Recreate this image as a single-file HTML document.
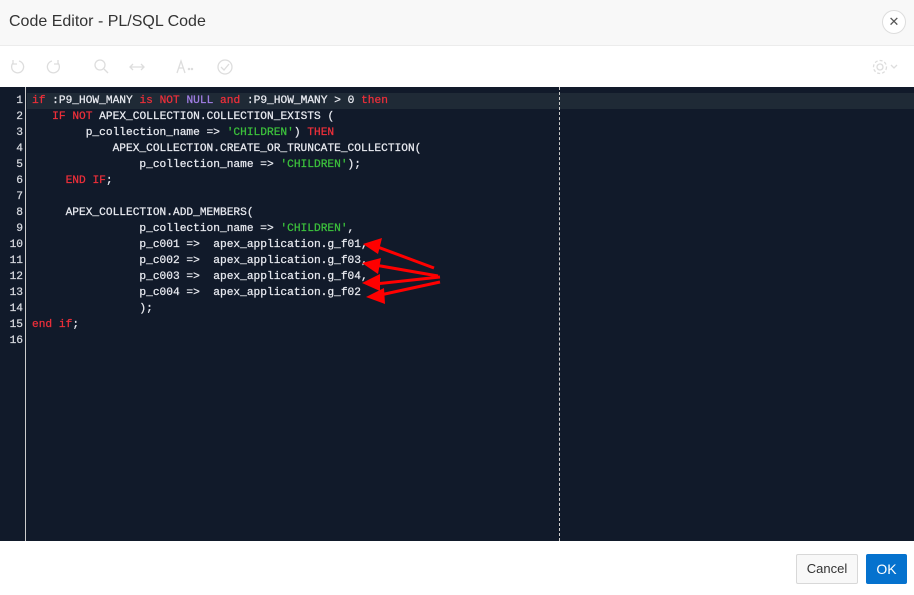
<!DOCTYPE html>
<html><head><meta charset="utf-8"><style>
*{margin:0;padding:0;box-sizing:border-box}
body{width:914px;height:595px;background:#fff;font-family:"Liberation Sans",sans-serif;position:relative;overflow:hidden}
.hdr{position:absolute;left:0;top:0;width:914px;height:46px;background:#f8f8f8;border-bottom:1px solid #ececec}
.hdr .t{position:absolute;left:9px;top:13px;font-size:16px;color:#333}
.x{position:absolute;left:882px;top:10px;width:24px;height:24px;border:1px solid #ddd;border-radius:50%;text-align:center;line-height:21px;font-size:13px;color:#555;background:#fff}
.tb{position:absolute;top:47px;left:0;width:914px;height:40px;background:#fff}
.ed{position:absolute;left:0;top:87px;width:914px;height:454px;background:#111a2a}
.gut{position:absolute;left:0;top:0;width:26px;height:454px;border-right:1px solid #ccc}
.dash{position:absolute;left:559px;top:0;height:454px;border-left:1px dashed #ccc}
.cur{position:absolute;left:27px;top:6px;width:887px;height:16px;background:#1f2a36}
.code{position:absolute;left:0;top:6px;font-family:"Liberation Mono",monospace;font-size:11.2px;line-height:16px;color:#e8eaf0;white-space:pre;-webkit-text-stroke:0.25px}
.ln{display:inline-block;width:23px;text-align:right;color:#d8dae0;margin-right:9px}
.k{color:#ee2f3a}.p{color:#a27fe6}.s{color:#3cc13c}
.btn{position:absolute;top:554px;height:30px;border-radius:2px;font-size:13px;line-height:28px;text-align:center}
</style></head><body>
<div class="hdr"><div class="t">Code Editor - PL/SQL Code</div><div class="x">✕</div></div>
<div class="tb">
<svg width="914" height="40" style="position:absolute;left:0;top:0" fill="none" stroke="#ddd" stroke-width="1.3">
<path d="M13 16 A6 6 0 1 0 19 14 M13 13 v4 h4"/>
<path d="M58 16 A6 6 0 1 1 52 14 M58 13 v4 h-4"/>
<circle cx="100" cy="18" r="5"/><path d="M104 22 l4 4"/>
<path d="M130 20 h14 M133 17 l-3 3 3 3 M141 17 l3 3 -3 3"/>
<path d="M177 26 l4 -12 4 12 M179 21 h4"/><circle cx="189" cy="22" r=".6"/><circle cx="192" cy="22" r=".6"/>
<circle cx="225" cy="20" r="7"/><path d="M221 20 l3 3 5 -6"/>
<circle cx="880" cy="20" r="3"/><circle cx="880" cy="20" r="6.5" stroke-dasharray="3 2"/><path d="M891 18 l3 3 3 -3"/>
</svg></div>
<div class="ed">
<div class="cur"></div>
<div class="gut"></div>
<div class="dash"></div>
<div class="code"><span class="ln">1</span><span class="k">if</span> :P9_HOW_MANY <span class="k">is</span> <span class="k">NOT</span> <span class="p">NULL</span> <span class="k">and</span> :P9_HOW_MANY &gt; 0 <span class="k">then</span>
<span class="ln">2</span>   <span class="k">IF</span> <span class="k">NOT</span> APEX_COLLECTION.COLLECTION_EXISTS (
<span class="ln">3</span>        p_collection_name =&gt; <span class="s">'CHILDREN'</span>) <span class="k">THEN</span>
<span class="ln">4</span>            APEX_COLLECTION.CREATE_OR_TRUNCATE_COLLECTION(
<span class="ln">5</span>                p_collection_name =&gt; <span class="s">'CHILDREN'</span>);
<span class="ln">6</span>     <span class="k">END</span> <span class="k">IF</span>;
<span class="ln">7</span>
<span class="ln">8</span>     APEX_COLLECTION.ADD_MEMBERS(
<span class="ln">9</span>                p_collection_name =&gt; <span class="s">'CHILDREN'</span>,
<span class="ln">10</span>                p_c001 =&gt;  apex_application.g_f01,
<span class="ln">11</span>                p_c002 =&gt;  apex_application.g_f03,
<span class="ln">12</span>                p_c003 =&gt;  apex_application.g_f04,
<span class="ln">13</span>                p_c004 =&gt;  apex_application.g_f02
<span class="ln">14</span>                );
<span class="ln">15</span><span class="k">end</span> <span class="k">if</span>;
<span class="ln">16</span></div>
<svg width="914" height="454" style="position:absolute;left:0;top:0">
<g stroke="#f00" stroke-width="3" fill="#f00">
<line x1="434" y1="181" x2="375" y2="159"/>
<line x1="438" y1="189" x2="375" y2="178"/>
<line x1="440" y1="190" x2="375" y2="197"/>
<line x1="440" y1="195" x2="380" y2="208"/>
<polygon points="363,157 382,151 378,167" stroke="none"/>
<polygon points="362,176 381,171 378,187" stroke="none"/>
<polygon points="362,196 380,187 380,204" stroke="none"/>
<polygon points="366,210 384,201 385,217" stroke="none"/>
</g></svg>
</div>
<div class="btn" style="left:796px;width:62px;background:#f8f8f8;border:1px solid #d8d8d8;color:#333">Cancel</div>
<div class="btn" style="left:866px;width:41px;background:#0572ce;color:#fff;font-size:14px;line-height:30px">OK</div>
</body></html>
